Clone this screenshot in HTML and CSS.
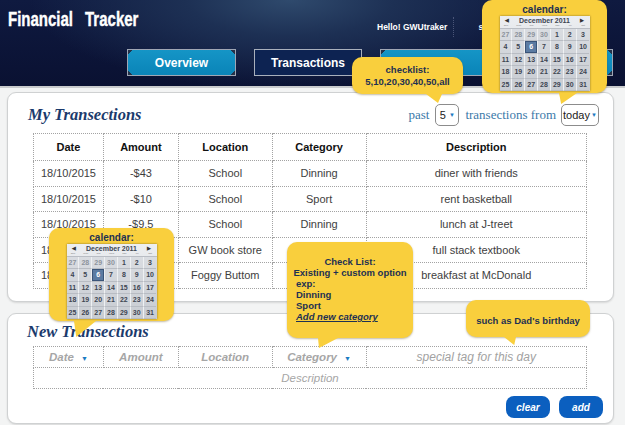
FILE: index.html
```html
<!DOCTYPE html>
<html>
<head>
<meta charset="utf-8">
<title>Financial Tracker</title>
<link rel="stylesheet" href="styles.css">
</head>
<body>
<header class="topbar">
  <div class="topline">
    <h1 class="brand"><span class="brand-text">Financial<span class="gap"></span>Tracker</span></h1>
    <div class="user"><span class="hello">Hello! GWUtraker</span><span class="sep"></span><span class="signout">sign out</span></div>
  </div>
  <nav class="tabs">
    <a class="tab tab-active">Overview</a>
    <a class="tab tab-dark">Transactions</a>
    <a class="tab tab-wide"></a>
  </nav>
</header>

<main class="content">
  <section class="panel panel-list">
    <div class="panel-head">
      <h2 class="panel-title">My Transections</h2>
      <div class="filter">
        <span>past</span>
        <span class="select sel-num">5<i class="caret">▼</i></span>
        <span>transections from</span>
        <span class="select sel-date">today<i class="caret">▼</i></span>
      </div>
    </div>
    <table class="grid">
      <colgroup><col class="c1"><col class="c2"><col class="c3"><col class="c4"><col class="c5"></colgroup>
      <thead>
        <tr><th>Date</th><th>Amount</th><th>Location</th><th>Category</th><th>Description</th></tr>
      </thead>
      <tbody>
        <tr><td>18/10/2015</td><td>-$43</td><td>School</td><td>Dinning</td><td>diner with friends</td></tr>
        <tr><td>18/10/2015</td><td>-$10</td><td>School</td><td>Sport</td><td>rent basketball</td></tr>
        <tr><td>18/10/2015</td><td>-$9.5</td><td>School</td><td>Dinning</td><td>lunch at J-treet</td></tr>
        <tr><td>18/10/2015</td><td>-$25</td><td>GW book store</td><td>Study</td><td>full stack textbook</td></tr>
        <tr><td>18/10/2015</td><td>-$8</td><td>Foggy Buttom</td><td>Dinning</td><td>breakfast at McDonald</td></tr>
      </tbody>
    </table>
  </section>

  <section class="panel panel-new">
    <h2 class="panel-title">New Transections</h2>
    <table class="grid grid-new">
      <colgroup><col class="c1"><col class="c2"><col class="c3"><col class="c4"><col class="c5"></colgroup>
      <tr>
        <td class="ph ph-b ph-drop">Date<i class="caret">▼</i></td>
        <td class="ph ph-b">Amount</td>
        <td class="ph ph-b">Location</td>
        <td class="ph ph-b ph-drop">Category<i class="caret">▼</i></td>
        <td class="ph ph-tag">special tag for this day</td>
      </tr>
      <tr><td class="ph" colspan="5">Description</td></tr>
    </table>
    <div class="actions">
      <button class="btn">clear</button>
      <button class="btn">add</button>
    </div>
  </section>
</main>

<!-- annotation callouts -->
<div class="pop pop-cal pop-cal-top">
  <div class="pop-label">calendar:</div>
  <div class="cal">
    <div class="cal-head"><span class="cal-arrow">◀</span><span class="cal-month">December 2011</span><span class="cal-arrow">▶</span></div>
    <div class="cal-dow"><span>Sun</span><span>Mon</span><span>Tue</span><span>Wed</span><span>Thu</span><span>Fri</span><span>Sat</span></div>
    <div class="cal-days">
      <span class="mut">27</span><span class="mut">28</span><span class="mut">29</span><span class="mut">30</span><span>1</span><span>2</span><span>3</span>
      <span>4</span><span>5</span><span class="sel">6</span><span>7</span><span>8</span><span>9</span><span>10</span>
      <span>11</span><span>12</span><span>13</span><span>14</span><span>15</span><span>16</span><span>17</span>
      <span>18</span><span>19</span><span>20</span><span>21</span><span>22</span><span>23</span><span>24</span>
      <span>25</span><span>26</span><span>27</span><span>28</span><span>29</span><span>30</span><span>31</span>
    </div>
  </div>
  <span class="tail tail-cal-top"></span>
</div>

<div class="pop pop-check-top">
  <div>checklist:</div>
  <div>5,10,20,30,40,50,all</div>
  <span class="tail tail-check-top"></span>
</div>

<div class="pop pop-cal pop-cal-left">
  <div class="pop-label">calendar:</div>
  <div class="cal">
    <div class="cal-head"><span class="cal-arrow">◀</span><span class="cal-month">December 2011</span><span class="cal-arrow">▶</span></div>
    <div class="cal-dow"><span>Sun</span><span>Mon</span><span>Tue</span><span>Wed</span><span>Thu</span><span>Fri</span><span>Sat</span></div>
    <div class="cal-days">
      <span class="mut">27</span><span class="mut">28</span><span class="mut">29</span><span class="mut">30</span><span>1</span><span>2</span><span>3</span>
      <span>4</span><span>5</span><span class="sel">6</span><span>7</span><span>8</span><span>9</span><span>10</span>
      <span>11</span><span>12</span><span>13</span><span>14</span><span>15</span><span>16</span><span>17</span>
      <span>18</span><span>19</span><span>20</span><span>21</span><span>22</span><span>23</span><span>24</span>
      <span>25</span><span>26</span><span>27</span><span>28</span><span>29</span><span>30</span><span>31</span>
    </div>
  </div>
  <span class="tail tail-cal-left"></span>
</div>

<div class="pop pop-cat">
  <div class="center">Check List:</div>
  <div class="center">Existing + custom option</div>
  <div class="line">exp:</div>
  <div class="line">Dinning</div>
  <div class="line">Sport</div>
  <div class="line addnew">Add new category</div>
  <span class="tail tail-cat"></span>
</div>

<div class="pop pop-tag">
  <div>such as Dad's birthday</div>
  <span class="tail tail-tag"></span>
</div>
</body>
</html>
```

FILE: styles.css
```css
* { box-sizing: border-box; }
html, body { margin: 0; padding: 0; }
body {
  width: 625px;
  height: 425px;
  overflow: hidden;
  position: relative;
  background: #f3f4f4;
  font-family: "Liberation Sans", Arial, sans-serif;
}

/* ---------- header ---------- */
.topbar {
  height: 88px;
  background:
    radial-gradient(ellipse 260px 90px at 290px 0px, #2f4a6d 0%, #1d3054 40%, rgba(14,22,58,0) 100%),
    linear-gradient(180deg, #0f1a40 0%, #0a1132 100%);
  border-bottom: 2px solid #c9cbcd;
}
.topline {
  height: 49px;
  display: grid;
  grid-template-columns: 377px auto;
  align-items: start;
}
.brand {
  margin: 0;
  padding: 7px 0 0 8px;
  color: #fff;
  font-family: "Liberation Sans", Arial, sans-serif;
  font-weight: bold;
  font-size: 20px;
  line-height: 24px;
  white-space: nowrap;
}
.brand-text {
  display: inline-block;
  transform: scaleX(0.75);
  transform-origin: 0 0;
  -webkit-text-stroke: 0.4px #fff;
}
.brand .gap { display: inline-block; width: 16px; }
.user {
  padding-top: 17px;
  display: flex;
  align-items: center;
  color: #fff;
  font-weight: bold;
  font-size: 8.5px;
  white-space: nowrap;
}
.sep {
  width: 0;
  height: 20px;
  border-left: 1px dotted #4a5578;
  margin: 0 24px 0 6px;
}
.tabs {
  display: flex;
  gap: 18px;
  padding-left: 127px;
}
.tab {
  height: 27px;
  display: flex;
  align-items: center;
  justify-content: center;
  color: #fff;
  font-weight: bold;
  font-size: 12px;
  border: 1px solid #9fa6b4;
}
.tab-active, .tab-wide {
  background:
    linear-gradient(135deg, #24324a 3px, transparent 3px),
    linear-gradient(225deg, #24324a 3px, transparent 3px),
    linear-gradient(45deg, #24324a 3px, transparent 3px),
    linear-gradient(315deg, #24324a 3px, transparent 3px),
    linear-gradient(180deg, #1595c6 0%, #0a84b8 100%);
}
.tab-active { width: 109px; }
.tab-dark { width: 108px; background: #0d2352; border-color: #a9b0bc; }
.tab-wide { width: 233px; }

/* ---------- panels ---------- */
.content {
  padding: 4px 11px 0 7px;
  display: flex;
  flex-direction: column;
  gap: 11px;
}
.panel {
  background: #fff;
  border: 1px solid #cfd1d2;
  border-radius: 9px;
  box-shadow: 0 1px 2px rgba(0,0,0,0.12);
}
.panel-list {
  height: 210px;
  padding: 9px 14px 0 20px;
}
.panel-head {
  height: 25px;
  display: flex;
  align-items: center;
  justify-content: space-between;
}
.panel-title {
  margin: 0;
  color: #1b3a6c;
  font-family: "Liberation Serif", "DejaVu Serif", serif;
  font-style: italic;
  font-weight: bold;
  font-size: 16.5px;
  line-height: 20px;
}
.filter {
  display: flex;
  align-items: center;
  gap: 6px;
  color: #3b79a9;
  font-family: "Liberation Serif", "DejaVu Serif", serif;
  font-size: 13px;
}
.select {
  display: inline-flex;
  align-items: center;
  justify-content: center;
  height: 22px;
  border: 1px solid #8c8c8c;
  border-radius: 5px;
  color: #222;
  font-family: "Liberation Sans", Arial, sans-serif;
  font-size: 11px;
  gap: 3px;
}
.sel-num { width: 24px; }
.sel-date { width: 38px; margin-left: -1px; gap: 1px; }
.caret {
  font-style: normal;
  color: #1b7bc2;
  font-size: 6px;
}

.grid {
  border-collapse: collapse;
  width: 554px;
  margin: 6px 0 0 5px;
  font-size: 11px;
  color: #3e3e3e;
}
.grid .c1 { width: 70px; }
.grid .c2 { width: 75px; }
.grid .c3 { width: 94px; }
.grid .c4 { width: 94px; }
.grid .c5 { width: 221px; }
.grid th, .grid td {
  border: 1px dotted #a3a3a3;
  text-align: center;
  padding: 0;
}
.grid th { height: 27px; color: #111; font-weight: bold; }
.grid td { height: 25.5px; }

.panel-new {
  height: 111px;
  padding: 8px 10px 0 19px;
  display: flex;
  flex-direction: column;
}
.grid-new { margin-top: 4px; width: 554px; margin-left: 6px; }
.grid-new td { height: 21px; }
.ph {
  color: #a6a6a6;
  font-style: italic;
  font-size: 11.5px;
}
.ph-b { font-weight: bold; }
.ph-drop { padding-left: 12px; }
.ph-tag { font-size: 12px; color: #a2a2a2; }
.ph .caret { margin-left: 7px; font-size: 7px; }
.actions {
  display: flex;
  justify-content: flex-end;
  gap: 9px;
  margin-top: 7px;
}
.btn {
  width: 44px;
  height: 22px;
  border: none;
  border-radius: 8px;
  background: #0b5fbf;
  color: #fff;
  font-family: "Liberation Sans", Arial, sans-serif;
  font-weight: bold;
  font-style: italic;
  font-size: 10px;
  padding: 0;
}

/* ---------- callouts ---------- */
.pop {
  position: absolute;
  background: #f9cf3d;
  border-radius: 10px;
  box-shadow: 0 1px 2px rgba(80,60,0,0.35);
  color: #1e3152;
  font-weight: bold;
  font-size: 10px;
  line-height: 11.5px;
  white-space: nowrap;
}
.tail {
  position: absolute;
  top: 100%;
  background: #f9cf3d;
}
.pop-cal {
  width: 125px;
  height: 93px;
  display: flex;
  flex-direction: column;
  align-items: center;
  padding-top: 4px;
}
.pop-cal-top { left: 482px; top: 0px; }
.pop-cal-left { left: 49px; top: 228px; }
.pop-label { font-size: 10px; line-height: 11px; }

.cal {
  width: 90px;
  margin-top: 1px;
  background: linear-gradient(180deg, #eceef1 0%, #d5d8dd 100%);
  box-shadow: 0 0 2px rgba(0,0,0,0.45);
  color: #3d4552;
}
.cal-head {
  height: 8px;
  display: flex;
  justify-content: space-between;
  align-items: center;
  padding: 1px 5px 0;
  font-size: 7px;
}
.cal-arrow { font-size: 5px; color: #333; }
.cal-month { font-size: 7px; line-height: 8px; }
.cal-dow {
  height: 4px;
  display: grid;
  grid-template-columns: repeat(7, 1fr);
  font-size: 2.5px;
  line-height: 4px;
  text-align: center;
  color: #777;
  font-weight: normal;
}
.cal-days {
  display: grid;
  grid-template-columns: repeat(7, 1fr);
  background: linear-gradient(180deg, #d9dce1 0%, #c8ccd2 100%);
  border-top: 1px solid #b9bdc4;
}
.cal-days span {
  height: 12.4px;
  line-height: 12px;
  text-align: center;
  font-size: 7px;
  border-right: 1px solid #eef0f2;
  border-bottom: 1px solid #b8bcc3;
}
.cal-days span:nth-child(7n) { border-right: none; }
.cal-days .mut { color: #8d939c; }
.cal-days .sel {
  background: #5b7ba2;
  color: #fff;
  box-shadow: inset 0 0 0 1px #3a5478;
}

.tail-cal-top { left: 77px; width: 18px; height: 11px; clip-path: polygon(0 0, 100% 0, 12% 100%); }
.tail-cal-left { left: 25px; width: 22px; height: 16px; clip-path: polygon(0 0, 100% 0, 10% 100%); }

.pop-check-top {
  left: 352px;
  top: 57px;
  width: 111px;
  height: 37px;
  display: flex;
  flex-direction: column;
  align-items: center;
  justify-content: center;
  font-size: 9.5px;
  line-height: 12px;
}
.tail-check-top { left: 74px; width: 16px; height: 9px; clip-path: polygon(0 0, 100% 0, 75% 100%); }

.pop-cat {
  left: 287px;
  top: 242px;
  width: 126px;
  height: 96px;
  padding: 14px 0 0 0;
  font-size: 9.5px;
  line-height: 11px;
}
.pop-cat .center { text-align: center; }
.pop-cat .line { padding-left: 9px; }
.addnew { font-style: italic; text-decoration: underline; }
.tail-cat { left: 31px; width: 20px; height: 10px; clip-path: polygon(0 0, 100% 0, 5% 100%); }

.pop-tag {
  left: 466px;
  top: 300px;
  width: 124px;
  height: 37px;
  padding: 15px 0 0 0;
  text-align: center;
  font-size: 9.5px;
}
.tail-tag { left: 38px; width: 12px; height: 8px; clip-path: polygon(0 0, 100% 0, 85% 100%); }
```
